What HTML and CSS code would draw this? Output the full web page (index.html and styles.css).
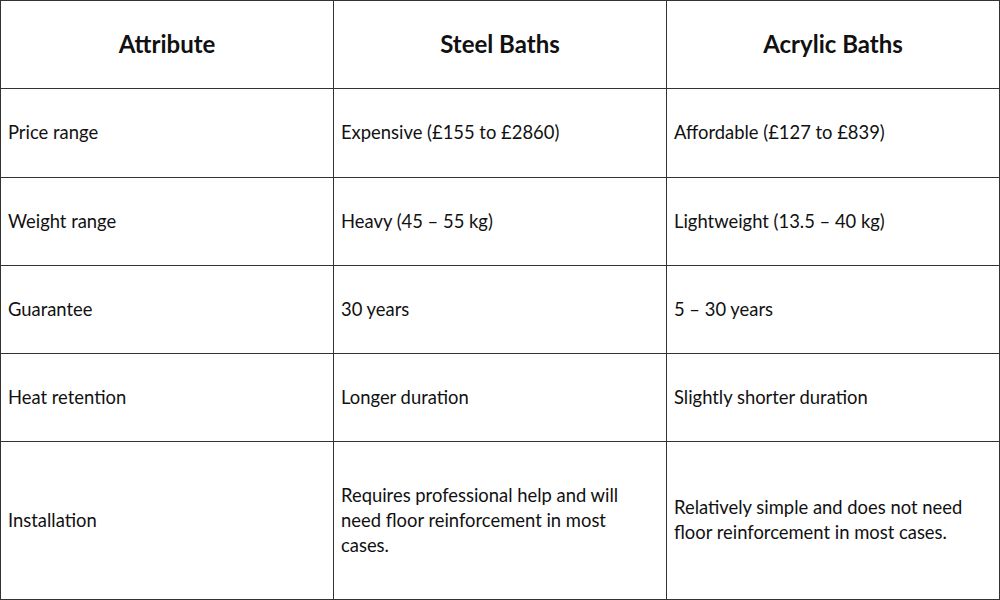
FILE: index.html
```html
<!DOCTYPE html>
<html>
<head>
<meta charset="utf-8">
<link rel="stylesheet" href="styles.css">
</head>
<body>
<table class="cmp">
  <colgroup><col class="c"><col class="c"><col class="c"></colgroup>
  <thead>
    <tr class="head"><th>Attribute</th><th>Steel Baths</th><th>Acrylic Baths</th></tr>
  </thead>
  <tbody>
    <tr class="r1"><td>Price range</td><td>Expensive (£155 to £2860)</td><td>Affordable (£127 to £839)</td></tr>
    <tr class="r"><td>Weight range</td><td>Heavy (45 – 55 kg)</td><td>Lightweight (13.5 – 40 kg)</td></tr>
    <tr class="r"><td>Guarantee</td><td>30 years</td><td>5 – 30 years</td></tr>
    <tr class="r"><td>Heat retention</td><td>Longer duration</td><td>Slightly shorter duration</td></tr>
    <tr class="last"><td>Installation</td><td>Requires professional help and will need floor reinforcement in most cases.</td><td>Relatively simple and does not need floor reinforcement in most cases.</td></tr>
  </tbody>
</table>
</body>
</html>
```
FILE: styles.css
```css
html, body { margin: 0; padding: 0; background: #fff; }
body { font-family: Lato, "Open Sans", sans-serif; color: #111; }
.cmp { border-collapse: collapse; width: 1000px; table-layout: fixed; }
.cmp th, .cmp td { border: 1px solid #333; }
.cmp th { font-size: 24px; font-weight: 700; text-align: center; color: #111; padding: 0 0 3px; }
.cmp td { font-size: 18.4px; line-height: 25px; padding: 0 30px 1px 7px; text-align: left; vertical-align: middle; }
.head { height: 88px; }
.r1 { height: 89px; }
.r { height: 88px; }
.last { height: 158px; }
```
